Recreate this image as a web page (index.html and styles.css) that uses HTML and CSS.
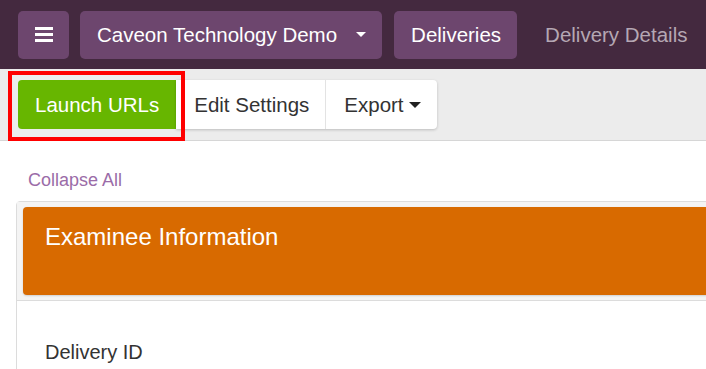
FILE: index.html
```html
<!DOCTYPE html>
<html lang="en">
<head>
  <meta charset="UTF-8" />
  <title>Delivery Details</title>
  <link rel="stylesheet" href="styles.css">
</head>
<body>
  <nav class="topnav">
    <button class="nav-btn menu-btn" aria-label="Menu">
      <span class="bar"></span>
      <span class="bar"></span>
      <span class="bar"></span>
    </button>
    <button class="nav-btn">Caveon Technology Demo <span class="caret"></span></button>
    <button class="nav-btn">Deliveries</button>
    <span class="nav-current">Delivery Details</span>
  </nav>

  <div class="toolbar">
    <button class="btn-launch">Launch URLs</button>
    <div class="btn-group">
      <button class="btn-plain">Edit Settings</button>
      <button class="btn-plain">Export<span class="caret dark"></span></button>
    </div>
    <!-- highlight annotation -->
    <div class="highlight"></div>
  </div>

  <div class="content">
    <a class="collapse-link" href="#">Collapse All</a>

    <div class="card">
      <div class="card-header">
        <div class="card-title">Examinee Information</div>
      </div>
      <div class="card-body">
        <div class="field-label">Delivery ID</div>
      </div>
    </div>
  </div>
</body>
</html>
```

FILE: styles.css
```css
* { box-sizing: border-box; }

body {
  margin: 0;
  font-family: "Liberation Sans", Arial, sans-serif;
  background: #fff;
  overflow: hidden;
}

button {
  font-family: inherit;
  border: none;
  cursor: pointer;
}

.topnav {
  height: 69px;
  background: #44293f;
  display: flex;
  align-items: center;
  gap: 12px;
  padding-left: 18px;
}

.nav-btn {
  height: 48px;
  padding: 0 16px 0 17px;
  background: #6d466e;
  color: #fff;
  font-size: 20.5px;
  border-radius: 5px;
  display: flex;
  align-items: center;
  white-space: nowrap;
}

.menu-btn {
  width: 51px;
  padding: 0;
  flex-direction: column;
  justify-content: center;
  gap: 3px;
  margin-right: -1px;
}

.menu-btn .bar {
  display: block;
  width: 18px;
  height: 3px;
  background: #fff;
}

.caret {
  display: inline-block;
  width: 0;
  height: 0;
  margin-left: 19px;
  border-left: 5.5px solid transparent;
  border-right: 5.5px solid transparent;
  border-top: 5.5px solid #fff;
}

.caret.dark {
  margin-left: 5px;
  border-left-width: 6px;
  border-right-width: 6px;
  border-top: 6px solid #222;
  vertical-align: 4px;
}

.nav-current {
  color: #b5a7b3;
  font-size: 20.5px;
  padding-left: 16px;
  white-space: nowrap;
}

.toolbar {
  position: relative;
  height: 72px;
  background: #ececec;
  border-bottom: 1px solid #d6d6d6;
  display: flex;
  align-items: flex-start;
  padding: 11px 0 0 18px;
}

.btn-launch {
  height: 49px;
  padding: 0 17px;
  background: #67b600;
  color: #fff;
  font-size: 20.5px;
  border-radius: 4px 0 0 4px;
}

.btn-group {
  display: flex;
  background: #fff;
  border-radius: 0 4px 4px 0;
  box-shadow: 0 1px 3px rgba(0, 0, 0, 0.2);
}

.btn-plain {
  height: 49px;
  padding: 0 16px 0 18px;
  background: transparent;
  color: #333;
  font-size: 20.5px;
}

.btn-plain + .btn-plain {
  border-left: 1px solid #e3e3e3;
}

.highlight {
  position: absolute;
  left: 8px;
  top: 2px;
  width: 177px;
  height: 70px;
  border: 4px solid #f00;
  pointer-events: none;
}

.content {
  padding: 29px 0 0 16px;
  margin-right: -30px;
}

.collapse-link {
  display: inline-block;
  margin-left: 12px;
  color: #9b6ca8;
  font-size: 18px;
  text-decoration: none;
  line-height: 21px;
}

.card {
  margin-top: 10px;
  border: 1px solid #dcdcdc;
  border-radius: 4px;
}

.card-header {
  background: #f4f4f4;
  padding: 5px 0 5px 6px;
  border-bottom: 1px solid #dcdcdc;
}

.card-title {
  background: #d86a00;
  color: #fff;
  font-size: 24px;
  line-height: 29px;
  padding: 15px 22px 44px;
  border-radius: 4px;
  box-shadow: 0 1px 2px rgba(0, 0, 0, 0.15);
}

.card-body {
  padding: 39px 28px 20px;
}

.field-label {
  color: #333;
  font-size: 20px;
  line-height: 24px;
}
```
